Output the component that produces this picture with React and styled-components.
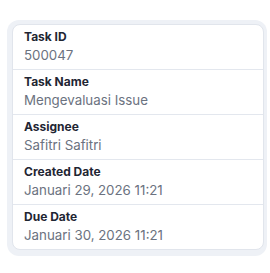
import React from 'react'
import styled, { createGlobalStyle } from 'styled-components'

const GlobalStyle = createGlobalStyle`
    html, body {
        margin: 0;
        padding: 0;
        background: #ffffff;
        font-family: Inter, "Noto Sans", sans-serif;
    }
`

const Page = styled.div`
    padding: 20px 3px 0 7px;
`

const Frame = styled.div`
    width: 260px;
    box-sizing: border-box;
    padding: 4px 3px 6px 5px;
    background: #eef1f6;
    border-radius: 12px;
`

const Card = styled.div`
    background: #ffffff;
    border: 1px solid #e1e5ec;
    border-radius: 8px;
    overflow: hidden;
`

const Row = styled.div`
    display: flex;
    flex-direction: column;
    padding: 4px 11px 4px;
    border-top: ${({ first }) => (first ? 'none' : '1px solid #e3e7ee')};
`

const Label = styled.div`
    font-size: 12px;
    line-height: 16px;
    font-weight: 700;
    color: #1f2633;
`

const Value = styled.div`
    font-size: 13.3px;
    line-height: 20px;
    color: #6b7280;
`

const fields = [
    { label: 'Task ID', value: '500047' },
    { label: 'Task Name', value: 'Mengevaluasi Issue' },
    { label: 'Assignee', value: 'Safitri Safitri' },
    { label: 'Created Date', value: 'Januari 29, 2026 11:21' },
    { label: 'Due Date', value: 'Januari 30, 2026 11:21' },
]

export default function App() {
    return (
        <>
            <GlobalStyle />
            <Page>
                <Frame>
                    <Card>
                        {fields.map((f, i) => (
                            <Row key={f.label} first={i === 0}>
                                <Label>{f.label}</Label>
                                <Value>{f.value}</Value>
                            </Row>
                        ))}
                    </Card>
                </Frame>
            </Page>
        </>
    )
}
